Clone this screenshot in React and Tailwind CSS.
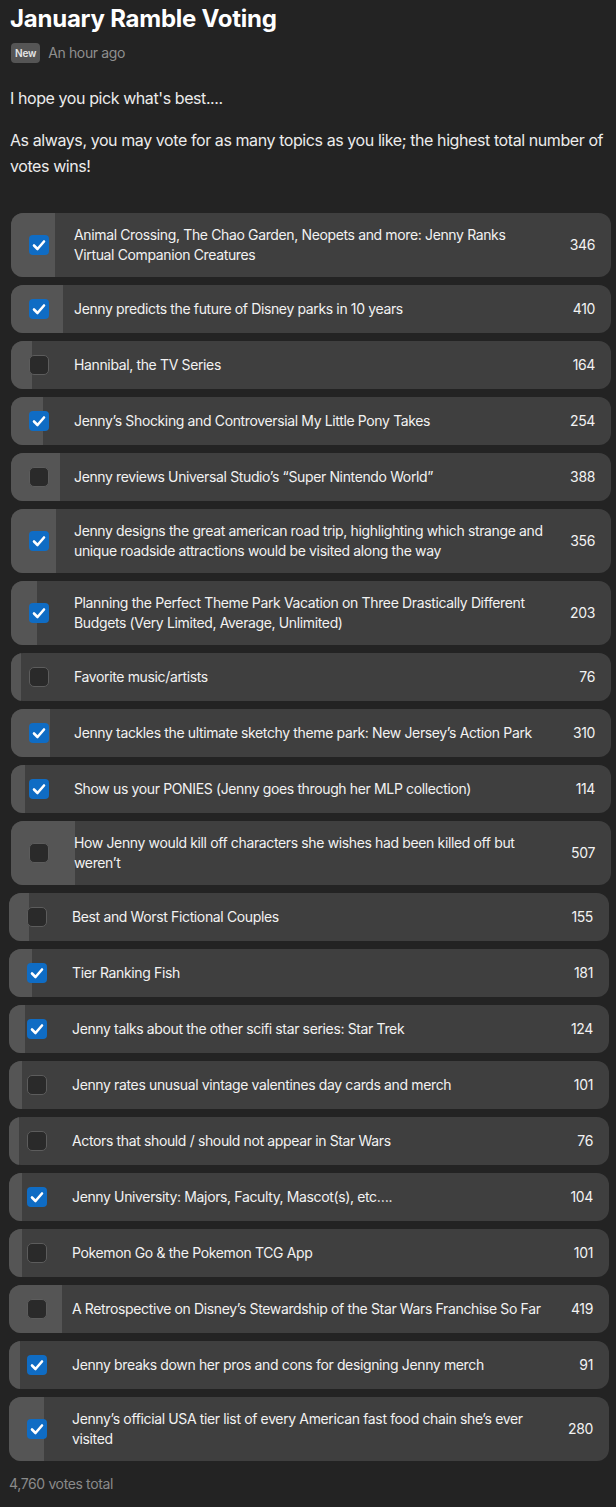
import React from 'react';

const TOTAL = 4760;

const topics = [
    { text: 'Animal Crossing, The Chao Garden, Neopets and more: Jenny Ranks Virtual Companion Creatures', votes: 346, checked: true },
    { text: 'Jenny predicts the future of Disney parks in 10 years', votes: 410, checked: true },
    { text: 'Hannibal, the TV Series', votes: 164, checked: false },
    { text: 'Jenny’s Shocking and Controversial My Little Pony Takes', votes: 254, checked: true },
    { text: 'Jenny reviews Universal Studio’s “Super Nintendo World”', votes: 388, checked: false },
    { text: 'Jenny designs the great american road trip, highlighting which strange and unique roadside attractions would be visited along the way', votes: 356, checked: true },
    { text: 'Planning the Perfect Theme Park Vacation on Three Drastically Different Budgets (Very Limited, Average, Unlimited)', votes: 203, checked: true },
    { text: 'Favorite music/artists', votes: 76, checked: false },
    { text: 'Jenny tackles the ultimate sketchy theme park: New Jersey’s Action Park', votes: 310, checked: true },
    { text: 'Show us your PONIES (Jenny goes through her MLP collection)', votes: 114, checked: true },
    { text: 'How Jenny would kill off characters she wishes had been killed off but weren’t', votes: 507, checked: false },
    { text: 'Best and Worst Fictional Couples', votes: 155, checked: false },
    { text: 'Tier Ranking Fish', votes: 181, checked: true },
    { text: 'Jenny talks about the other scifi star series: Star Trek', votes: 124, checked: true },
    { text: 'Jenny rates unusual vintage valentines day cards and merch', votes: 101, checked: false },
    { text: 'Actors that should / should not appear in Star Wars', votes: 76, checked: false },
    { text: 'Jenny University: Majors, Faculty, Mascot(s), etc….', votes: 104, checked: true },
    { text: 'Pokemon Go & the Pokemon TCG App', votes: 101, checked: false },
    { text: 'A Retrospective on Disney’s Stewardship of the Star Wars Franchise So Far', votes: 419, checked: false },
    { text: 'Jenny breaks down her pros and cons for designing Jenny merch', votes: 91, checked: true },
    { text: 'Jenny’s official USA tier list of every American fast food chain she’s ever visited', votes: 280, checked: true },
];

const Checkbox = ({ checked }) =>
    checked ? (
        <div className="w-5 h-5 shrink-0 rounded-[4px] bg-[#0f6cc4] flex items-center justify-center">
            <svg viewBox="0 0 20 20" className="w-5 h-5">
                <polyline points="5,10.5 8.5,14 15,6.5" fill="none" stroke="white" strokeWidth="2.6" strokeLinecap="round" strokeLinejoin="round" />
            </svg>
        </div>
    ) : (
        <div className="w-5 h-5 shrink-0 rounded-[5px] bg-[#2a2a2a] border border-[#5c5c5c]" />
    );

const TopicRow = ({ topic, shifted }) => (
    <div className={`relative w-[600px] min-h-12 rounded-xl overflow-hidden bg-[#3f3f3f] flex items-center ${shifted ? 'ml-[9px]' : 'ml-[11px]'}`}>
        {/* vote share bar */}
        <div className="absolute inset-y-0 left-0 bg-[#555555]" style={{ width: `${(topic.votes / TOTAL) * 100}%` }} />
        <div className="relative flex items-center w-full py-3">
            <div className="ml-[18px]">
                <Checkbox checked={topic.checked} />
            </div>
            <div className="ml-[25px] w-[473px] text-sm leading-5 tracking-[-0.026em] text-[#f2f2f2]">{topic.text}</div>
            <div className="flex-1 pr-4 text-right text-sm leading-5 tracking-[-0.026em] text-[#f2f2f2]">{topic.votes}</div>
        </div>
    </div>
);

export default function App() {
    return (
        <div className="min-h-[1507px] bg-[#232323] font-['Inter','Noto_Sans',sans-serif] text-white">
            <div className="px-[10px] pt-[3px]">
                <h1 className="text-2xl leading-8 font-bold tracking-[-0.01em] text-white">January Ramble Voting</h1>
                <div className="mt-2 flex items-center gap-2">
                    <span className="h-5 px-1 rounded-[4px] bg-[#555555] text-[10px] font-semibold tracking-[-0.02em] text-[#e6e6e6] flex items-center ml-px">New</span>
                    <span className="text-sm leading-5 tracking-[-0.026em] text-[#8f8f8f]">An hour ago</span>
                </div>
                <p className="mt-[22px] text-base leading-[26px] tracking-[-0.026em] text-[#ececec]">I hope you pick what's best....</p>
                <p className="mt-4 text-base leading-[26px] tracking-[-0.026em] text-[#ececec]">
                    As always, you may vote for as many topics as you like; the highest total number of votes wins!
                </p>
            </div>
            <div className="mt-[34px] flex flex-col gap-2">
                {topics.map((t, i) => (
                    <TopicRow key={i} topic={t} shifted={i >= 11} />
                ))}
            </div>
            <div className="mt-[13px] pl-[9px] text-sm leading-5 tracking-[-0.026em] text-[#8a8a8a]">4,760 votes total</div>
        </div>
    );
}
